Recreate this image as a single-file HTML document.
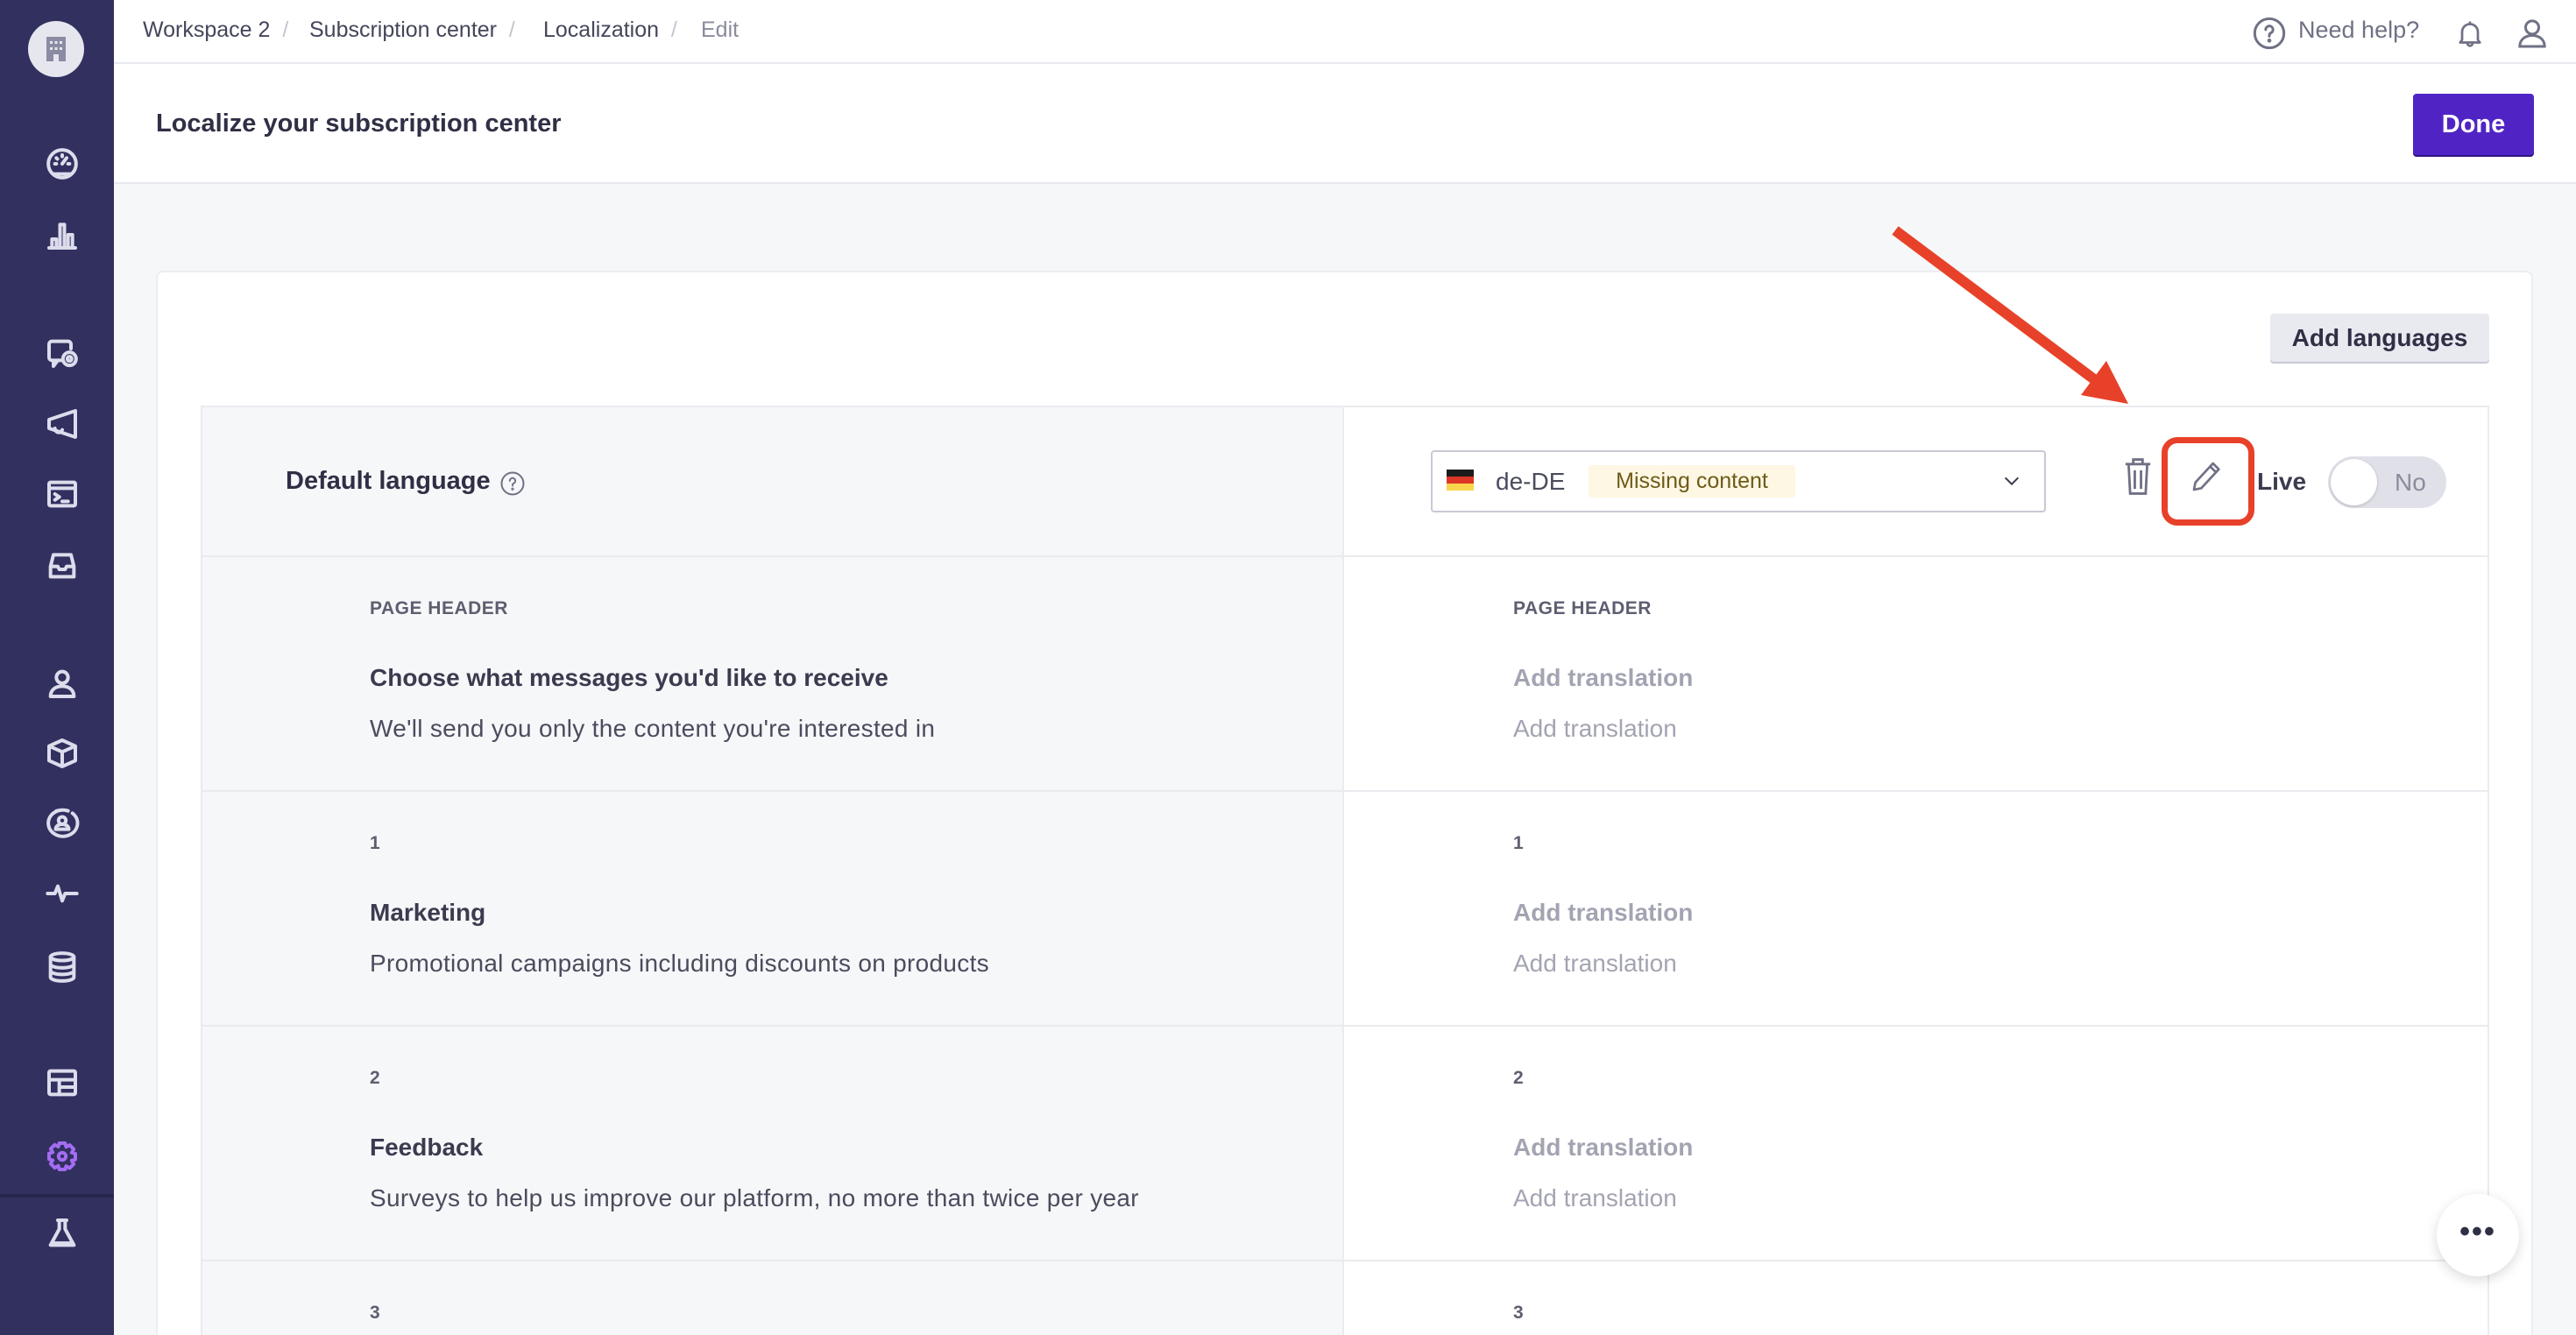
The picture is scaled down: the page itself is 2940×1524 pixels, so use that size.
<!DOCTYPE html>
<html style="width:2940px;height:1524px;overflow:hidden"><head><meta charset="utf-8"><style>
*{box-sizing:border-box;margin:0;padding:0}
body{width:2940px;height:1524px;overflow:hidden;font-family:"Liberation Sans",sans-serif;background:#f6f7f9;position:relative;color:#2f2f45}
.abs{position:absolute}
#side{left:0;top:0;width:130px;height:1524px;background:#31305f}
.ic{position:absolute;left:51px;width:40px;height:40px}
.ic svg{width:40px;height:40px;fill:none;stroke:#dcdcec;stroke-width:2.4;stroke-linecap:round;stroke-linejoin:round}
#top{left:130px;top:0;right:0;height:73px;background:#fff;border-bottom:2px solid #e8e9ee}
.bc{position:absolute;top:20px;font-size:25px;color:#44465a}
.sl{color:#c4c5cf}
#hdr{left:130px;top:73px;right:0;height:137px;background:#fff;border-bottom:2px solid #e8e9ee}
#card{left:178px;top:309px;width:2713px;height:1215px;background:#fff;border:2px solid #eceef2;border-bottom:none;border-radius:8px 8px 0 0}
.row{position:absolute;left:229px;width:2612px;border-top:2px solid #eaebef}
.lc{position:absolute;left:0;top:0;width:1305px;height:100%;background:#f6f7f9;border-right:2px solid #eaebef;border-left:2px solid #eaebef}
.rc{position:absolute;left:1305px;top:0;width:1307px;height:100%;background:#fff;border-right:2px solid #eaebef}
.lab{position:absolute;font-size:21px;color:#5d5f70;font-weight:bold;letter-spacing:.5px}
.ttl{position:absolute;font-size:28px;font-weight:bold;color:#3a3b4f}
.dsc{position:absolute;font-size:28px;color:#4a4c5e;letter-spacing:.3px}
.at{position:absolute;font-size:28px;color:#a3a4b2}
</style></head><body>
<div id="side" class="abs">
 <div class="abs" style="left:32px;top:24px;width:64px;height:64px;border-radius:50%;background:#e6e6ee"></div>
 <svg class="abs" style="left:50px;top:40px" width="28" height="32"><rect x="3" y="2" width="22" height="28" fill="#8b8ca3"/><g fill="#e6e6ee"><rect x="7" y="7" width="3" height="3"/><rect x="12.5" y="7" width="3" height="3"/><rect x="18" y="7" width="3" height="3"/><rect x="7" y="14" width="3" height="3"/><rect x="12.5" y="14" width="3" height="3"/><rect x="18" y="14" width="3" height="3"/><rect x="11" y="22" width="6" height="8"/></g></svg>
 <div class="ic" style="top:167px"><svg viewBox="0 0 24 24"><circle cx="12" cy="12" r="9.5"/><path d="M12 12l3-4M7 12h1M16 12h1M12 6v1M8 8l.7.7"/><path d="M6 19h12"/></svg></div>
 <div class="ic" style="top:248px"><svg viewBox="0 0 24 24"><path d="M3 21h18M5 21v-6h3v6M10.5 21V5h3v16M16 21v-9h3v9"/></svg></div>
 <div class="ic" style="top:383px"><svg viewBox="0 0 24 24"><path d="M11 17H5a2 2 0 0 1-2-2V6a2 2 0 0 1 2-2h11a2 2 0 0 1 2 2v3M6 17v4l3-4"/><circle cx="17" cy="16" r="4.5"/><circle cx="17" cy="16" r="1.5"/></svg></div>
 <div class="ic" style="top:464px"><svg viewBox="0 0 24 24"><path d="M3 9v6l18 6V3L3 9zM7 15c0 3 4 4 5 1"/></svg></div>
 <div class="ic" style="top:544px"><svg viewBox="0 0 24 24"><rect x="3" y="4" width="18" height="16" rx="1"/><path d="M3 8h18M7 12l3 2-3 2M12 17h4"/></svg></div>
 <div class="ic" style="top:625px"><svg viewBox="0 0 24 24"><path d="M4 13l2-8h12l2 8v7H4zM4 13h5l1 2h4l1-2h5"/></svg></div>
 <div class="ic" style="top:760px"><svg viewBox="0 0 24 24"><circle cx="12" cy="8" r="4"/><path d="M4 21c0-5 4-7 8-7s8 2 8 7z"/></svg></div>
 <div class="ic" style="top:840px"><svg viewBox="0 0 24 24"><path d="M12 3l9 4v10l-9 4-9-4V7zM3 7l9 4 9-4M12 11v10"/></svg></div>
 <div class="ic" style="top:920px"><svg viewBox="0 0 24 24"><path d="M19 5a10 9 0 1 1-3-1.6M8 3.5a10 9 0 0 1 3-.5"/><circle cx="12" cy="10" r="2.5"/><path d="M7.5 16c0-2 2-3.5 4.5-3.5s4.5 1.5 4.5 3.5z"/></svg></div>
 <div class="ic" style="top:1000px"><svg viewBox="0 0 24 24"><path d="M2 12h5l2-5 3 10 2-5h8"/></svg></div>
 <div class="ic" style="top:1084px"><svg viewBox="0 0 24 24"><ellipse cx="12" cy="5" rx="8" ry="2.5"/><path d="M4 5v14c0 1.4 3.6 2.5 8 2.5s8-1.1 8-2.5V5M4 10c0 1.4 3.6 2.5 8 2.5s8-1.1 8-2.5M4 14.5c0 1.4 3.6 2.5 8 2.5s8-1.1 8-2.5"/></svg></div>
 <div class="ic" style="top:1216px"><svg viewBox="0 0 24 24"><rect x="3" y="4" width="18" height="16" rx="1"/><path d="M3 10h18M10 10v10M10 15h11"/></svg></div>
 <div class="ic" style="top:1300px"><svg viewBox="0 0 24 24" style="stroke:#a36cf2"><circle cx="12" cy="12" r="2.5"/><path d="M10 3h4l.7 2.6 2.4-1.3 2.8 2.8-1.4 2.4 2.5.7v4l-2.5.7 1.4 2.4-2.8 2.8-2.4-1.4L14 21h-4l-.7-2.5-2.4 1.4-2.8-2.8 1.4-2.4L3 14v-4l2.5-.7-1.4-2.4 2.8-2.8 2.4 1.3z"/></svg></div>
 <div class="abs" style="left:0;top:1363px;width:130px;height:4px;background:#27264f"></div>
 <div class="ic" style="top:1388px"><svg viewBox="0 0 24 24"><path d="M9 3h6M10 3v6l-6 11h16L14 9V3"/><path d="M5 19h14" stroke-width="3"/></svg></div>
</div>
<div id="top" class="abs">
 <span class="bc" style="left:33px">Workspace 2 <span class="sl">&nbsp;/&nbsp;</span></span>
 <span class="bc" style="left:223px">Subscription center <span class="sl">&nbsp;/&nbsp;</span></span>
 <span class="bc" style="left:490px">Localization <span class="sl">&nbsp;/&nbsp;</span></span>
 <span class="bc" style="left:670px;color:#8a8c9c">Edit</span>
 <svg class="abs" style="left:2440px;top:18px" width="40" height="40" viewBox="0 0 24 24" fill="none" stroke="#6f7185" stroke-width="1.8" stroke-linecap="round"><circle cx="12" cy="12" r="10"/><path d="M9.5 9.5a2.5 2.5 0 1 1 3.5 2.3c-.7.3-1 .9-1 1.7v.5"/><circle cx="12" cy="17" r=".5" fill="#6f7185"/></svg>
 <span class="bc" style="left:2493px;color:#6f7185;font-size:27px;top:19px">Need help?</span>
 <svg class="abs" style="left:2671px;top:20px" width="36" height="36" viewBox="0 0 24 24" fill="none" stroke="#6f7185" stroke-width="1.8" stroke-linejoin="round"><path d="M6 17V11a6 6 0 0 1 12 0v6l1.5 2h-15zM10 19.5a2 2 0 0 0 4 0M12 3v2"/></svg>
 <svg class="abs" style="left:2740px;top:18px" width="40" height="40" viewBox="0 0 24 24" fill="none" stroke="#6f7185" stroke-width="1.8"><circle cx="12" cy="8" r="4.5"/><path d="M3.5 21c0-5 4-7.5 8.5-7.5s8.5 2.5 8.5 7.5z"/></svg>
</div>
<div id="hdr" class="abs">
 <div class="abs" style="left:48px;top:52px;font-size:29px;font-weight:bold;color:#2f2f45">Localize your subscription center</div>
 <div class="abs" style="left:2624px;top:34px;width:138px;height:70px;background:#5024c4;border-radius:4px;box-shadow:0 2px 0 #2e1580;color:#fff;font-size:29px;font-weight:bold;text-align:center;line-height:70px">Done</div>
</div>
<div id="card" class="abs"></div>
<div class="abs" style="left:2591px;top:358px;width:250px;height:55px;background:#e9eaf0;border-radius:4px;box-shadow:0 2px 0 #c8c9d5;font-size:28px;font-weight:bold;color:#2f2f45;text-align:center;line-height:55px">Add languages</div>

<div class="row" style="top:463px;height:171px">
 <div class="lc"></div><div class="rc"></div>
 <div class="abs" style="left:97px;top:68px;font-size:29px;font-weight:bold;color:#2f2f45">Default language</div>
 <svg class="abs" style="left:341px;top:72px" width="30" height="30" viewBox="0 0 24 24" fill="none" stroke="#6f7185" stroke-width="1.6" stroke-linecap="round"><circle cx="12" cy="12" r="10"/><path d="M9.5 9.5a2.5 2.5 0 1 1 3.5 2.3c-.7.3-1 .9-1 1.7v.5"/><circle cx="12" cy="17" r=".5"/></svg>
 <div class="abs" style="left:1404px;top:49px;width:702px;height:71px;border:2px solid #c8c9d5;border-radius:4px;background:#fff">
  <div class="abs" style="left:16px;top:20px;width:31px;height:8px;background:#1c1c1c"></div>
  <div class="abs" style="left:16px;top:28px;width:31px;height:8px;background:#dd3626"></div>
  <div class="abs" style="left:16px;top:36px;width:31px;height:8px;background:#f8d54d"></div>
  <div class="abs" style="left:72px;top:18px;font-size:28px;color:#4a4c5e">de-DE</div>
  <div class="abs" style="left:178px;top:15px;width:236px;height:37px;background:#fdf7e3;border-radius:4px;font-size:25px;color:#6e5a18;line-height:37px;text-align:center">Missing content</div>
  <svg class="abs" style="left:648px;top:22px" width="26" height="22" viewBox="0 0 24 24" fill="none" stroke="#3a3b4f" stroke-width="2.2"><path d="M4 8l8 8 8-8"/></svg>
 </div>
 <svg class="abs" style="left:2193px;top:56px" width="36" height="46" viewBox="0 0 20 26" fill="none" stroke="#6f7185" stroke-width="1.6"><path d="M2 5h16M7 5V2h6v3M4 5l1 19h10l1-19M8 9v12M12 9v12"/></svg>
 <svg class="abs" style="left:2270px;top:56px" width="40" height="46" viewBox="0 0 24 24" fill="none" stroke="#6f7185" stroke-width="1.6" stroke-linejoin="round"><path d="M16 3l4 4L8 20l-5 1 1-5zM14 5l4 4"/></svg>
 <div class="abs" style="left:2238px;top:34px;width:106px;height:101px;border:7px solid #e8412a;border-radius:18px"></div>
 <div class="abs" style="left:2347px;top:69px;font-size:28px;font-weight:bold;color:#3a3b4f">Live</div>
 <div class="abs" style="left:2428px;top:56px;width:135px;height:59px;background:#dfe0e8;border-radius:30px">
  <div class="abs" style="left:3px;top:3px;width:53px;height:53px;border-radius:50%;background:#fff;box-shadow:0 1px 3px rgba(0,0,0,.2)"></div>
  <div class="abs" style="left:76px;top:14px;font-size:28px;color:#8a8c9c">No</div>
 </div>
</div>

<div class="row" style="top:634px;height:268px">
 <div class="lc"></div><div class="rc"></div>
 <div class="lab" style="left:193px;top:47px">PAGE HEADER</div>
 <div class="ttl" style="left:193px;top:122px">Choose what messages you'd like to receive</div>
 <div class="dsc" style="left:193px;top:180px">We'll send you only the content you're interested in</div>
 <div class="lab" style="left:1498px;top:47px">PAGE HEADER</div>
 <div class="at" style="left:1498px;top:122px;font-weight:bold">Add translation</div>
 <div class="at" style="left:1498px;top:180px">Add translation</div>
</div>
<div class="row" style="top:902px;height:268px">
 <div class="lc"></div><div class="rc"></div>
 <div class="lab" style="left:193px;top:47px">1</div>
 <div class="ttl" style="left:193px;top:122px">Marketing</div>
 <div class="dsc" style="left:193px;top:180px">Promotional campaigns including discounts on products</div>
 <div class="lab" style="left:1498px;top:47px">1</div>
 <div class="at" style="left:1498px;top:122px;font-weight:bold">Add translation</div>
 <div class="at" style="left:1498px;top:180px">Add translation</div>
</div>
<div class="row" style="top:1170px;height:268px">
 <div class="lc"></div><div class="rc"></div>
 <div class="lab" style="left:193px;top:47px">2</div>
 <div class="ttl" style="left:193px;top:122px">Feedback</div>
 <div class="dsc" style="left:193px;top:180px">Surveys to help us improve our platform, no more than twice per year</div>
 <div class="lab" style="left:1498px;top:47px">2</div>
 <div class="at" style="left:1498px;top:122px;font-weight:bold">Add translation</div>
 <div class="at" style="left:1498px;top:180px">Add translation</div>
</div>
<div class="row" style="top:1438px;height:86px">
 <div class="lc"></div><div class="rc"></div>
 <div class="lab" style="left:193px;top:47px">3</div>
 <div class="lab" style="left:1498px;top:47px">3</div>
</div>

<svg class="abs" style="left:0;top:0" width="2940" height="1524"><line x1="2163" y1="263" x2="2390" y2="433" stroke="#e8412a" stroke-width="12"/><polygon points="2429,461 2375,451 2404,412" fill="#e8412a"/></svg>

<div class="abs" style="left:2781px;top:1363px;width:94px;height:94px;border-radius:50%;background:#fff;box-shadow:0 4px 14px rgba(0,0,0,.15);text-align:center;line-height:86px;font-size:34px;color:#2f2f45;font-weight:bold;letter-spacing:2px">•••</div>
</body></html>
